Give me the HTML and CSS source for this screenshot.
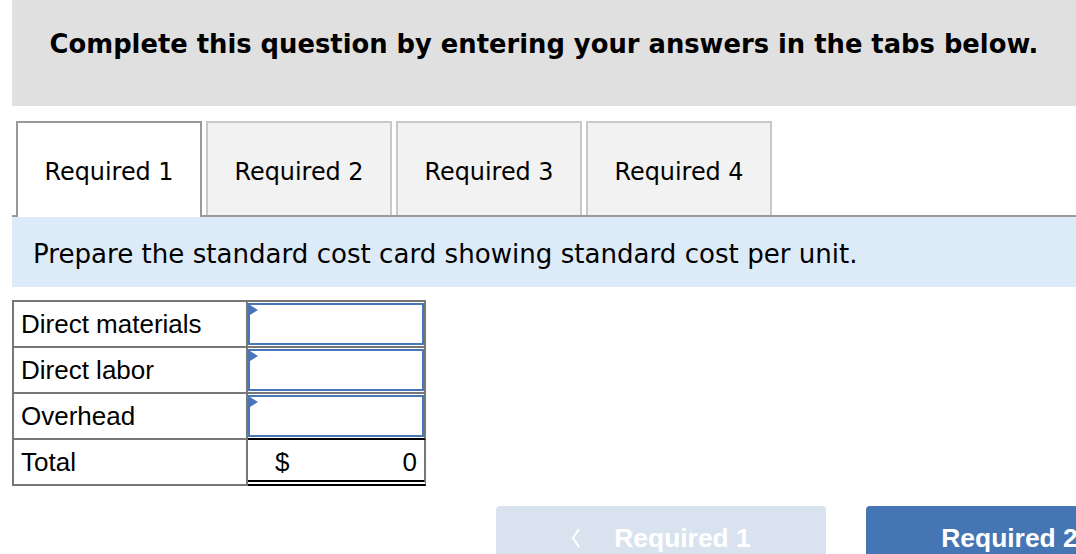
FILE: index.html
```html
<!DOCTYPE html>
<html lang="en">
<head>
    <meta charset="UTF-8" />
    <meta name="viewport" content="width=device-width, initial-scale=1" />
    <title>Standard Cost Card</title>
    <link rel="stylesheet" href="styles.css">
</head>
<body>
    <div class="intro">Complete this question by entering your answers in the tabs below.</div>

    <div class="tabs">
        <div class="tab active">Required 1</div>
        <div class="tab">Required 2</div>
        <div class="tab">Required 3</div>
        <div class="tab">Required 4</div>
    </div>

    <div class="prompt">Prepare the standard cost card showing standard cost per unit.</div>

    <table class="card">
        <colgroup>
            <col class="label-col">
            <col class="value-col">
        </colgroup>
        <tr>
            <td class="label">Direct materials</td>
            <td class="entry"><div class="field"><input type="text" /></div></td>
        </tr>
        <tr>
            <td class="label">Direct labor</td>
            <td class="entry"><div class="field"><input type="text" /></div></td>
        </tr>
        <tr>
            <td class="label">Overhead</td>
            <td class="entry last"><div class="field"><input type="text" /></div></td>
        </tr>
        <tr>
            <td class="label">Total</td>
            <td class="total"><span class="currency">$</span>0</td>
        </tr>
    </table>

    <div class="nav">
        <button class="prev" disabled>
            <svg width="10" height="20" viewBox="0 0 10 20"><polyline points="8,1 2,10 8,19" fill="none" stroke="#fff" stroke-width="2"/></svg>
            Required 1
        </button>
        <button class="next">
            Required 2
            <svg width="10" height="20" viewBox="0 0 10 20"><polyline points="2,1 8,10 2,19" fill="none" stroke="#fff" stroke-width="2"/></svg>
        </button>
    </div>
</body>
</html>
```

FILE: styles.css
```css
body {
    margin: 0;
    padding: 0 0 0 12px;
    overflow: hidden;
    background: white;
    color: #000;
    font-family: "DejaVu Sans", Verdana, sans-serif;
}
.intro {
    height: 106px;
    box-sizing: border-box;
    padding-top: 29px;
    background: #e0e0e0;
    font-size: 25.8px;
    font-weight: bold;
    text-align: center;
}
.tabs {
    display: flex;
    align-items: flex-end;
    margin-top: 15px;
    padding-left: 4px;
    border-bottom: 2px solid #999;
}
.tab {
    width: 186px;
    height: 94px;
    box-sizing: border-box;
    margin-right: 4px;
    padding-top: 5px;
    border: 2px solid #c8c8c8;
    border-bottom: none;
    background: #f2f2f2;
    font-size: 23.9px;
    display: flex;
    align-items: center;
    justify-content: center;
}
.tab.active {
    height: 96px;
    margin-bottom: -2px;
    padding-top: 3px;
    border-color: #999;
    background: white;
}
.prompt {
    height: 70px;
    box-sizing: border-box;
    padding: 22px 0 0 21px;
    background: #ddebf8;
    font-size: 26.1px;
}
.card {
    margin-top: 13px;
    width: 414px;
    table-layout: fixed;
    border-collapse: separate;
    border-spacing: 0;
    border-top: 2px solid #777;
    border-left: 2px solid #777;
    font-family: "Liberation Sans", Arial, sans-serif;
    font-size: 26px;
}
.label-col {
    width: 234px;
}
.value-col {
    width: 178px;
}
.card td {
    height: 46px;
    box-sizing: border-box;
    padding: 0 7px;
    border-right: 2px solid #777;
    border-bottom: 2px solid #777;
}
.card td.entry {
    padding: 1px 0 0 0;
    vertical-align: top;
}
.card td.last {
    border-bottom: 2px solid #000;
}
.field {
    position: relative;
}
.field input {
    display: block;
    width: 100%;
    height: 42px;
    box-sizing: border-box;
    margin: 0;
    border: 2px solid #4a76b8;
    font: inherit;
}
.field::before {
    content: "";
    position: absolute;
    left: 2px;
    top: 2px;
    border-top: 5px solid transparent;
    border-bottom: 5px solid transparent;
    border-left: 8px solid #4a76b8;
}
.card td.total {
    padding-top: 4px;
    border-bottom: 6px double #000;
    text-align: right;
}
.currency {
    float: left;
    margin-left: 20px;
}
.nav {
    display: flex;
    gap: 40px;
    margin: 20px 0 0 484px;
}
.nav button {
    flex: none;
    width: 330px;
    height: 60px;
    padding: 4px 0 0;
    border: none;
    border-radius: 4px;
    color: white;
    font-family: "Liberation Sans", Arial, sans-serif;
    font-size: 26.4px;
    font-weight: bold;
    display: flex;
    align-items: center;
    justify-content: center;
    gap: 33px;
}
.nav .prev {
    background: #d9e3ef;
}
.nav .next {
    background: #4675b3;
}
```
